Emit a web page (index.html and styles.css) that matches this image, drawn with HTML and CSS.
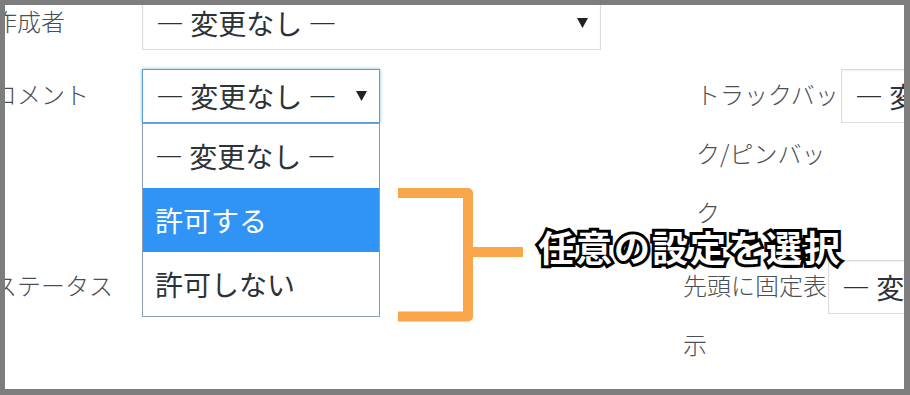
FILE: index.html
```html
<!DOCTYPE html>
<html lang="ja">
<head>
  <meta charset="UTF-8">
  <meta name="viewport" content="width=device-width, initial-scale=1.0">
  <title>一括編集 - コメント設定</title>
  <link rel="stylesheet" href="styles.css">
</head>
<body>
  <div class="frame">
    <div class="bulk-edit">
      <div class="field">
        <span class="field-label">作成者</span>
        <div class="combo">
          <div class="select select-wide">
            <span>— 変更なし —</span>
            <svg class="arrow" width="11" height="10" viewBox="0 0 11 10"><path d="M0 0h11L5.5 10z"/></svg>
          </div>
        </div>
      </div>

      <div class="field">
        <span class="field-label">コメント</span>
        <div class="combo">
          <div class="select select-narrow is-focused">
            <span>— 変更なし —</span>
            <svg class="arrow" width="11" height="10" viewBox="0 0 11 10"><path d="M0 0h11L5.5 10z"/></svg>
          </div>
          <ul class="dropdown">
            <li class="option">— 変更なし —</li>
            <li class="option is-selected">許可する</li>
            <li class="option">許可しない</li>
          </ul>
        </div>
      </div>

      <div class="field field-right field-indent">
        <span class="field-label">トラックバック/ピンバック</span>
        <div class="combo">
          <div class="select select-cut">
            <span>— 変更なし —</span>
          </div>
        </div>
      </div>

      <div class="field">
        <span class="field-label">ステータス</span>
      </div>

      <div class="field field-right">
        <span class="field-label">先頭に固定表示</span>
        <div class="combo">
          <div class="select select-cut">
            <span>— 変更なし —</span>
          </div>
        </div>
      </div>
    </div>

    <!-- annotation -->
    <svg class="bracket" width="135" height="143" viewBox="393 183 135 143">
      <path d="M398 193H468V316.5H398M468 252H523"/>
    </svg>
    <div class="callout">任意の設定を選択</div>
  </div>
</body>
</html>
```

FILE: styles.css
```css
/* General Styling */
body {
  margin: 0;
  font-family: "Noto Sans CJK JP", sans-serif;
  color: #2c3338;
}

.frame {
  position: relative;
  width: 910px;
  height: 395px;
  box-sizing: border-box;
  border: 5px solid #7d7d7d;
  border-right-width: 6px;
  border-bottom-width: 6px;
  background: #fff;
  overflow: hidden;
}

/* Bulk edit form */
.bulk-edit {
  display: grid;
  grid-template-columns: 690px 1fr;
  row-gap: 14px;
  margin: -12px 0 0 -12px;
}

.field {
  grid-column: 1;
  display: flex;
  align-items: flex-start;
}

.field-right {
  grid-column: 2;
}

.field-indent {
  padding-left: 13px;
}

.field-label {
  flex: 0 0 149px;
  margin: -2px 0 2px;
  font-size: 24px;
  font-weight: 300;
  line-height: 59px;
  color: #4a4f55;
  white-space: nowrap;
}

.field-right .field-label {
  flex-basis: 145px;
  white-space: normal;
}

/* Selects */
.combo {
  position: relative;
  margin-top: 3px;
}

.select {
  box-sizing: border-box;
  height: 54px;
  display: flex;
  align-items: center;
  justify-content: space-between;
  padding: 0 12px 0 13px;
  border: 1px solid #dcdcde;
  box-shadow: inset 0 1px 2px rgba(0, 0, 0, 0.07);
  background: #fff;
  font-size: 28px;
  white-space: nowrap;
}

.select-wide {
  width: 459px;
}

.select-narrow {
  width: 238px;
}

.select-cut {
  width: 240px;
}

.select.is-focused {
  border-color: #5b9dd9;
  box-shadow: 0 0 3px rgba(30, 140, 190, 0.6);
}

.arrow {
  fill: #222;
  flex-shrink: 0;
}

/* Open option list */
.dropdown {
  position: absolute;
  top: 100%;
  left: 0;
  width: 238px;
  box-sizing: border-box;
  margin: 0;
  padding: 0;
  list-style: none;
  border: 1px solid #8d9cb0;
  background: #fff;
}

.option {
  height: 64px;
  line-height: 64px;
  padding-left: 12px;
  font-size: 28px;
  white-space: nowrap;
}

.option.is-selected {
  background: #3094f6;
  color: #fff;
}

/* Annotation */
.bracket {
  position: absolute;
  left: 388px;
  top: 178px;
  fill: none;
  stroke: #f9a64b;
  stroke-width: 10;
  stroke-linejoin: round;
}

.callout {
  position: absolute;
  left: 533px;
  top: 223px;
  font-size: 36px;
  line-height: 36px;
  font-weight: 700;
  letter-spacing: 2px;
  color: #fff;
  -webkit-text-stroke: 6px #000;
  paint-order: stroke fill;
  text-shadow: 2px 2px 3px rgba(0, 0, 0, 0.35);
  white-space: nowrap;
}
```
